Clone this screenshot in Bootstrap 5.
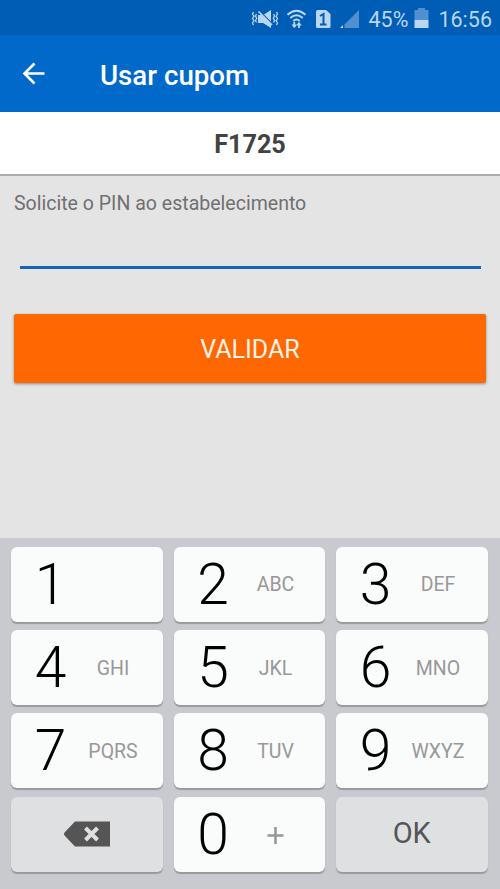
<!DOCTYPE html>
<html lang="pt-BR">
  <head>
    <meta charset="utf-8" />
    <meta name="viewport" content="width=device-width, initial-scale=1" />
    <title>Usar cupom</title>
    <link
      rel="stylesheet"
      href="https://cdn.jsdelivr.net/npm/bootstrap@5.3.0/dist/css/bootstrap.min.css"
    />
    <style>
      body {
        font-family: Roboto, "Liberation Sans", sans-serif;
        background: #e4e4e4;
        height: 889px;
        overflow: hidden;
      }

      /* status bar */
      .status-bar {
        height: 35px;
        background: #005db5;
        color: #b9d6f2;
        font-size: 21.5px;
        line-height: 35px;
        padding: 3px 8px 0 0;
      }
      .status-bar svg {
        display: block;
        flex: none;
      }
      .status-icons {
        margin: 0 9px 1px 0;
      }
      .status-battery {
        margin: 0 9px 3px 6px;
      }

      .app-bar {
        height: 77px;
        background: #0069c9;
        padding: 0 22px;
      }
      .app-bar h1 {
        font-size: 27.7px;
        font-weight: 500;
        line-height: 32px;
        margin: 4px 0 0 54px;
      }

      .coupon-code {
        height: 64px;
        border-bottom: 2px solid #adadad;
        color: #424242;
        font-size: 25.2px;
        line-height: 66px;
      }

      /* pin form */
      .pin-form {
        height: 361.5px;
        padding: 0 14px;
      }
      .pin-form label {
        color: #707070;
        font-size: 19.55px;
        line-height: 24px;
        margin-top: 16px;
      }
      .pin-form .form-control {
        width: 461px;
        height: 53px;
        margin: 0 auto;
        border-bottom: 3px solid #1565b5;
      }
      .btn-validate {
        --bs-btn-color: #fff3e6;
        --bs-btn-bg: #ff6700;
        --bs-btn-border-radius: 2px;
        height: 69px;
        margin-top: 45px;
        padding-top: 9px;
        font-size: 25px;
        box-shadow: 0 1px 3px rgba(0, 0, 0, 0.4);
      }

      /* numeric keyboard */
      .keyboard {
        height: 351.5px;
        background: #c9cacf;
        padding: 9px 12.5px 0 11px;
      }
      .key-grid {
        display: grid;
        grid-template-columns: repeat(3, 1fr);
        grid-auto-rows: 75px;
        gap: 8.4px 11px;
      }
      .key-btn {
        border: 0;
        border-radius: 6px;
        background: #fafbfb;
        box-shadow: 0 1.5px 1px #98999d;
        padding: 0 0 0 17px;
        color: #000;
      }
      .key-digit {
        width: 45px;
        font-size: 57px;
        font-weight: 300;
        line-height: 75px;
      }
      .key-letters {
        width: 80px;
        color: #989898;
        font-size: 19.5px;
        padding-top: 2px;
      }
      .key-plus {
        height: 19px;
      }
      .key-action {
        background: #dfe0e2;
        color: #555;
        font-size: 29px;
        padding: 0;
      }
    </style>
  </head>

  <body>
    <div class="status-bar d-flex align-items-center justify-content-end">
      <svg class="status-icons" width="120" height="22" viewBox="0 0 120 22">
        <!-- muted speaker with vibration marks -->
        <g fill="none" stroke="#b9d6f2" stroke-width="1.3">
          <path d="M13.500 4l-1 2 1.500 2.200-1.500 2.300 1.500 2.300-1.500 2.200 1 2M16.500 6l-1 2 1.200 2.300-1.200 2.200 1 2" />
          <path d="M36.500 4l1 2-1.500 2.200 1.500 2.300-1.500 2.300 1.500 2.200-1 2M33.500 6l1 2-1.200 2.300 1.200 2.200-1 2" />
        </g>
        <path fill="#b9d6f2" d="M18 7h3.500l9.500 9v4l-8-5h-5zM24 6.500L31 2v11.500z" />
        <path stroke="#b9d6f2" stroke-width="1.700" d="M18.500 3.500l13.500 13.500" />
        <!-- wifi with transfer arrows -->
        <g fill="none" stroke="#b9d6f2" stroke-width="2">
          <path d="M47.500 6.800q9-8 18 0M50.300 10q6.200-5.500 12.400 0M53.300 13q3.200-3 6.400 0" />
          <path stroke-width="1.800" d="M54.300 14v4M59 15.500v4.500" />
        </g>
        <path fill="#b9d6f2" d="M51.500 16.500h5.600l-2.800 3.700zM56.200 17.500h5.600l-2.800-3.700z" />
        <!-- sim 1 -->
        <path fill="#b9d6f2" d="M77.500 2h8.500l4.500 4v12.500a1.500 1.500 0 0 1-1.500 1.500h-11.500a1.500 1.500 0 0 1-1.500-1.500v-15a1.500 1.500 0 0 1 1.500-1.500z" />
        <path fill="none" stroke="#005db5" stroke-width="2" d="M80 8l3.500-2v10M80 16.500h6.500" />
        <!-- signal strength -->
        <path fill="#5090d0" d="M119 2v18H104.500v-3.500z" />
        <path fill="#b9d6f2" d="M103 17v3H100z" />
      </svg>
      <span>45%</span>
      <svg class="status-battery" width="15" height="20" viewBox="0 0 15 20">
        <path fill="#5090d0" d="M4 0h7v2h3.500v10H.500V2H4z" />
        <path fill="#b9d6f2" d="M.500 12h14v8H.500z" />
      </svg>
      <span>16:56</span>
    </div>

    <nav class="app-bar d-flex align-items-center text-white">
      <svg width="24" height="24" viewBox="0 0 24 24" fill="none" stroke="#fff" stroke-width="2.600">
        <path d="M22.500 11.500H2.500M12.500 1.500L2.500 11.500l10 10" />
      </svg>
      <h1>Usar cupom</h1>
    </nav>

    <div class="coupon-code bg-white text-center fw-bold">F1725</div>

    <form class="pin-form d-flex flex-column" id="pin-form">
      <label for="pin">Solicite o PIN ao estabelecimento</label>
      <input
        type="tel"
        class="form-control border-top-0 border-start-0 border-end-0 rounded-0 bg-transparent shadow-none"
        id="pin"
      />
      <button type="submit" class="btn btn-validate w-100 border-0">VALIDAR</button>
    </form>

    <div class="keyboard">
      <div class="key-grid">
        <button class="key-btn d-flex align-items-center"><span class="key-digit">1</span></button>
        <button class="key-btn d-flex align-items-center"><span class="key-digit">2</span><span class="key-letters">ABC</span></button>
        <button class="key-btn d-flex align-items-center"><span class="key-digit">3</span><span class="key-letters">DEF</span></button>
        <button class="key-btn d-flex align-items-center"><span class="key-digit">4</span><span class="key-letters">GHI</span></button>
        <button class="key-btn d-flex align-items-center"><span class="key-digit">5</span><span class="key-letters">JKL</span></button>
        <button class="key-btn d-flex align-items-center"><span class="key-digit">6</span><span class="key-letters">MNO</span></button>
        <button class="key-btn d-flex align-items-center"><span class="key-digit">7</span><span class="key-letters">PQRS</span></button>
        <button class="key-btn d-flex align-items-center"><span class="key-digit">8</span><span class="key-letters">TUV</span></button>
        <button class="key-btn d-flex align-items-center"><span class="key-digit">9</span><span class="key-letters">WXYZ</span></button>
        <button class="key-btn key-action d-flex align-items-center justify-content-center" aria-label="Apagar">
          <svg width="46" height="26" viewBox="0 0 46 26">
            <path fill="#555" d="M11 .500h35v25H11L1 15q-2-2 0-4z" />
            <path stroke="#dfe0e2" stroke-width="4" d="M21.500 7l12 12M33.500 7l-12 12" />
          </svg>
        </button>
        <button class="key-btn d-flex align-items-center">
          <span class="key-digit">0</span>
          <svg class="key-letters key-plus" viewBox="0 0 80 17" stroke="#989898" stroke-width="2.600">
            <path d="M39.500 0v17M31.500 8.500h16" />
          </svg>
        </button>
        <button class="key-btn key-action d-flex align-items-center justify-content-center">OK</button>
      </div>
    </div>

    <script src="https://cdn.jsdelivr.net/npm/bootstrap@5.3.0/dist/js/bootstrap.bundle.min.js"></script>
  </body>
</html>
